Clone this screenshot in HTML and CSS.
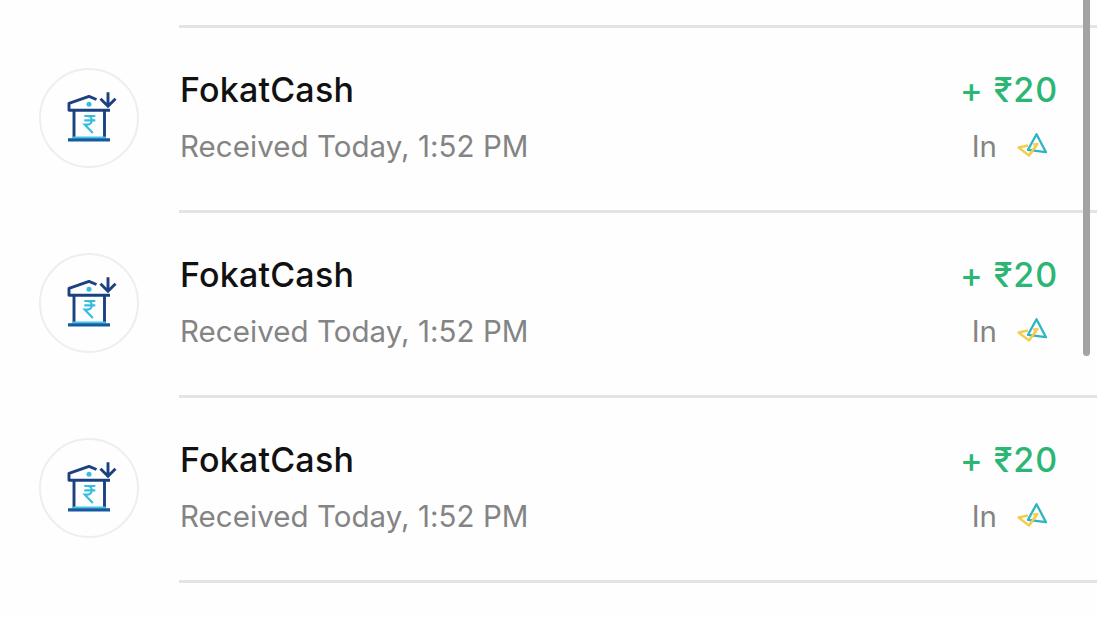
FILE: index.html
```html
<!DOCTYPE html>
<html lang="en">
<head>
    <meta charset="UTF-8">
    <meta name="viewport" content="width=device-width, initial-scale=1.0">
    <title>Transactions</title>
    <link rel="stylesheet" href="styles.css">
</head>
<body>

<svg class="symbols" width="0" height="0">
    <symbol id="bank" viewBox="0 0 64 64">
        <g fill="none" stroke-width="2.9">
            <path d="M39.5 13.5 L32 10.4 L12 17.3 V24.2 H53" stroke="#1b4180" stroke-linejoin="round"/>
            <path d="M17 25 V52 M47.5 25 V52" stroke="#1b4180"/>
            <path d="M51 6.3 V20 M43.5 12.7 L51 20.2 L58.5 12.7" stroke="#1b4180"/>
            <path d="M15.7 51.4 H48.7" stroke="#3fc4ea" stroke-width="2"/>
            <path d="M11 53.9 H53" stroke="#145aa0" stroke-width="3.2"/>
            <path d="M27.3 30 H38.3 M27.3 34.3 H38.3 M27.3 30 H30.3 C36.3 30 36.3 38.7 30.3 38.7 H27.8 L35.8 47" stroke="#35bde0" stroke-width="2.2"/>
        </g>
        <circle cx="32" cy="18.3" r="2.5" fill="#35bde0"/>
    </symbol>
    <symbol id="wallet" viewBox="0 0 32 28">
        <g fill="none" stroke-width="2.3" stroke-linejoin="round">
            <path d="M12 13.5 L2.5 15.5 L13 23.5 L21.5 12 L17 12.6" stroke="#f3cd4b"/>
            <path d="M20.5 2.2 L30 20.2 L12 17.8 Z" stroke="#2bb5c5"/>
            <path d="M14 22 L20 14" stroke="#f3cd4b"/>
        </g>
    </symbol>
</svg>

<div class="list">
    <div class="item previous"></div>

    <div class="item">
        <div class="avatar"><svg class="bank-icon"><use href="#bank"/></svg></div>
        <div class="details">
            <div class="info">
                <div class="name">FokatCash</div>
                <div class="time">Received Today, 1:52 PM</div>
            </div>
            <div class="payment">
                <div class="amount">+ ₹20</div>
                <div class="source">In <svg class="wallet-icon"><use href="#wallet"/></svg></div>
            </div>
        </div>
    </div>

    <div class="item">
        <div class="avatar"><svg class="bank-icon"><use href="#bank"/></svg></div>
        <div class="details">
            <div class="info">
                <div class="name">FokatCash</div>
                <div class="time">Received Today, 1:52 PM</div>
            </div>
            <div class="payment">
                <div class="amount">+ ₹20</div>
                <div class="source">In <svg class="wallet-icon"><use href="#wallet"/></svg></div>
            </div>
        </div>
    </div>

    <div class="item">
        <div class="avatar"><svg class="bank-icon"><use href="#bank"/></svg></div>
        <div class="details">
            <div class="info">
                <div class="name">FokatCash</div>
                <div class="time">Received Today, 1:52 PM</div>
            </div>
            <div class="payment">
                <div class="amount">+ ₹20</div>
                <div class="source">In <svg class="wallet-icon"><use href="#wallet"/></svg></div>
            </div>
        </div>
    </div>
</div>

<div class="scrollbar"></div>

</body>
</html>
```
FILE: styles.css
```css
* {
    margin: 0;
    padding: 0;
    box-sizing: border-box;
}

body {
    font-family: Inter, Roboto, sans-serif;
    background-color: #fefefe;
    color: #111;
    height: 617px;
    overflow: hidden;
}

.symbols {
    display: block;
}

.item {
    display: flex;
    height: 185px;
    padding-left: 39px;
}

.item.previous {
    height: 28px;
    margin-left: 179px;
    border-bottom: 3px solid #e4e4e4;
}

.avatar {
    width: 100px;
    height: 100px;
    margin-top: 40px;
    margin-right: 40px;
    border: 2px solid #eeeeee;
    border-radius: 50%;
    display: flex;
    align-items: center;
    justify-content: center;
}

.bank-icon {
    width: 64px;
    height: 64px;
}

.details {
    flex: 1;
    display: flex;
    justify-content: space-between;
    padding: 41px 39px 0 1px;
    border-bottom: 3px solid #e4e4e4;
}

.name,
.amount {
    font-size: 34px;
    font-weight: 500;
    line-height: 42px;
    white-space: nowrap;
}

.name {
    letter-spacing: 0.2px;
}

.time,
.source {
    margin-top: 17px;
    font-size: 29.5px;
    line-height: 36px;
    color: #848484;
    white-space: nowrap;
}

.time {
    letter-spacing: 0.05px;
}

.payment {
    text-align: right;
}

.amount {
    color: #2cb673;
    letter-spacing: 0.9px;
}

.source {
    display: flex;
    justify-content: flex-end;
    align-items: center;
    padding-right: 10px;
    gap: 19px;
}

.wallet-icon {
    width: 32px;
    height: 28px;
}

/* overlay scroll indicator */
.scrollbar {
    position: absolute;
    top: -10px;
    left: 1083px;
    width: 7px;
    height: 366px;
    border-radius: 4px;
    background-color: #a3a3a3;
}
```
